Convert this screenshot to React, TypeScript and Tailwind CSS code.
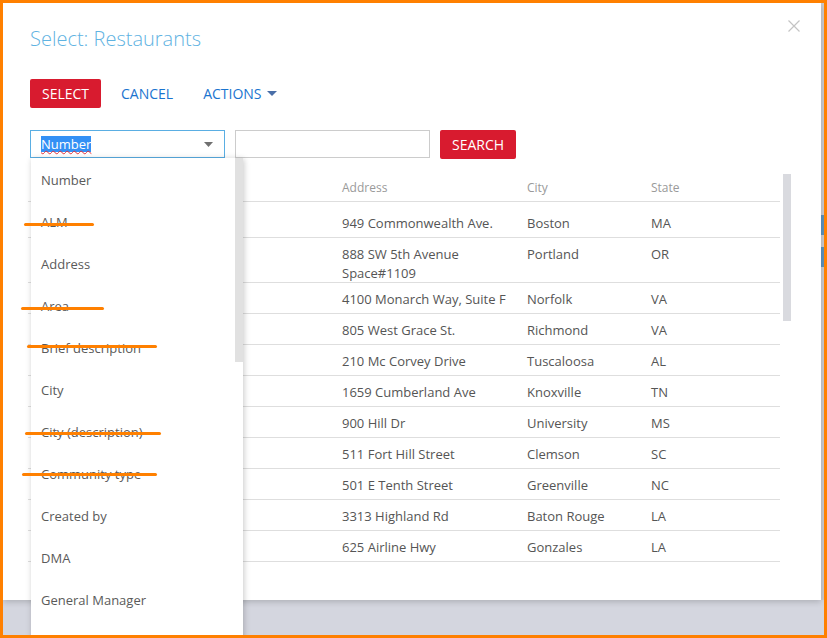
import React from "react";

const rows: { addr: string[]; city: string; state: string; h: string; pt: string }[] = [
  { addr: ["949 Commonwealth Ave."], city: "Boston", state: "MA", h: "h-[36px]", pt: "pt-[12px]" },
  { addr: ["888 SW 5th Avenue", "Space#1109"], city: "Portland", state: "OR", h: "h-[45px]", pt: "pt-[7px]" },
  { addr: ["4100 Monarch Way, Suite F"], city: "Norfolk", state: "VA", h: "h-[31px]", pt: "pt-[7px]" },
  { addr: ["805 West Grace St."], city: "Richmond", state: "VA", h: "h-[31px]", pt: "pt-[7px]" },
  { addr: ["210 Mc Corvey Drive"], city: "Tuscaloosa", state: "AL", h: "h-[31px]", pt: "pt-[7px]" },
  { addr: ["1659 Cumberland Ave"], city: "Knoxville", state: "TN", h: "h-[31px]", pt: "pt-[7px]" },
  { addr: ["900 Hill Dr"], city: "University", state: "MS", h: "h-[31px]", pt: "pt-[7px]" },
  { addr: ["511 Fort Hill Street"], city: "Clemson", state: "SC", h: "h-[31px]", pt: "pt-[7px]" },
  { addr: ["501 E Tenth Street"], city: "Greenville", state: "NC", h: "h-[31px]", pt: "pt-[7px]" },
  { addr: ["3313 Highland Rd"], city: "Baton Rouge", state: "LA", h: "h-[31px]", pt: "pt-[7px]" },
  { addr: ["625 Airline Hwy"], city: "Gonzales", state: "LA", h: "h-[31px]", pt: "pt-[7px]" },
];

const items = [
  "Number",
  "ALM",
  "Address",
  "Area",
  "Brief description",
  "City",
  "City (description)",
  "Community type",
  "Created by",
  "DMA",
  "General Manager",
];

export default function App() {
  return (
    <div
      className="w-[827px] h-[638px] overflow-hidden border-[3px] border-[#ff8000] bg-[#d4d6df] relative"
      style={{ fontFamily: '"Open Sans", "Liberation Sans", sans-serif' }}
    >
      <div className="flex">
        {/* Modal */}
        <div className="relative w-[818px] h-[597px] bg-white shadow-[0_2px_6px_rgba(0,0,0,0.18)] pl-[27px] pt-[22px] flex flex-col">
          {/* Close */}
          <svg className="absolute left-[785px] top-[17px]" width="12" height="12" viewBox="0 0 12 12">
            <path d="M0.5 0.5 L11.5 11.5 M11.5 0.5 L0.5 11.5" stroke="#c4c4c4" strokeWidth="1.2" />
          </svg>

          <div className="text-[20px] font-light leading-[28px] text-[#5fb3e2]">Select: Restaurants</div>

          {/* Buttons */}
          <div className="mt-[26px] flex items-center h-[29px]">
            <div className="w-[71px] h-[29px] rounded-[2px] bg-[#d81b2f] text-white text-[14px] flex items-center justify-center">
              SELECT
            </div>
            <div className="ml-[20px] text-[14px] text-[#1a74cf]">CANCEL</div>
            <div className="ml-[30px] text-[14px] text-[#1a74cf] flex items-center">
              ACTIONS
              <svg className="ml-[5px]" width="10" height="6" viewBox="0 0 10 6">
                <path d="M0 0 L10 0 L5 5 Z" fill="#4a6fa8" />
              </svg>
            </div>
          </div>

          {/* Search row */}
          <div className="mt-[22px] flex items-start gap-[10px] h-[29px]">
            <div className="w-[195px] h-[28px] border border-[#5aaee3] flex items-center pl-[10px] pr-[11px] justify-between">
              <span className="text-[13px] leading-[16px] bg-[#3390f5] text-white underline decoration-wavy decoration-[#e5303a] decoration-1 underline-offset-[1px]">
                Number
              </span>
              <svg width="9" height="5" viewBox="0 0 9 5">
                <path d="M0 0 L9 0 L4.5 5 Z" fill="#707070" />
              </svg>
            </div>
            <div className="w-[195px] h-[28px] border border-[#cccccc]" />
            <div className="w-[76px] h-[29px] rounded-[2px] bg-[#d81b2f] text-white text-[14px] flex items-center justify-center">
              SEARCH
            </div>
          </div>

          {/* Table */}
          <div className="mt-[12px] -ml-[2px] flex items-start gap-[3px]">
            <div className="w-[752px] text-[13px] text-[#555]">
              <div className="grid grid-cols-[304px_185px_124px_139px] h-[31px] border-b border-[#dedede] pt-[8px] text-[12px] leading-[17px] text-[#9a9a9a]">
                <div />
                <div className="pl-[10px]">Address</div>
                <div className="pl-[10px]">City</div>
                <div className="pl-[10px]">State</div>
              </div>
              {rows.map((r, i) => (
                <div
                  key={i}
                  className={`grid grid-cols-[304px_185px_124px_139px] border-b border-[#dedede] leading-[19px] ${r.h} ${r.pt}`}
                >
                  <div />
                  <div className="pl-[10px]">
                    {r.addr.map((a, j) => (
                      <div key={j}>{a}</div>
                    ))}
                  </div>
                  <div className="pl-[10px]">{r.city}</div>
                  <div className="pl-[10px]">{r.state}</div>
                </div>
              ))}
            </div>
            <div className="mt-[3px] w-[8px] h-[147px] bg-[#d9dadf]" />
          </div>

          {/* Dropdown list */}
          <div className="absolute left-[28px] top-[155px] w-[212px] h-[500px] bg-white shadow-[1px_1px_6px_rgba(0,0,0,0.22)] flex">
            <div className="flex-1 pt-[2px]">
              {items.map((it) => (
                <div key={it} className="h-[42px] flex items-center pl-[10px] text-[13px] text-[#5a5a5a]">
                  {it}
                </div>
              ))}
            </div>
            <div className="w-[8px] h-[204px] bg-[#e1e1e1]" />
          </div>
        </div>

        {/* Right strip of page behind */}
        <div className="w-[3px] h-[597px] bg-[#c9cad0] flex flex-col">
          <div className="mt-[212px] h-[20px] bg-[#5d93bd]" />
          <div className="mt-[12px] h-[20px] bg-[#5d93bd]" />
        </div>
      </div>

      {/* Annotation strike lines */}
      <div className="absolute left-[21px] top-[220px] w-[70px] h-[3px] rounded-full bg-[#ff8000]" />
      <div className="absolute left-[18px] top-[304px] w-[83px] h-[3px] rounded-full bg-[#ff8000]" />
      <div className="absolute left-[24px] top-[342px] w-[130px] h-[3px] rounded-full bg-[#ff8000]" />
      <div className="absolute left-[22px] top-[429px] w-[136px] h-[3px] rounded-full bg-[#ff8000]" />
      <div className="absolute left-[19px] top-[470px] w-[135px] h-[3px] rounded-full bg-[#ff8000]" />
    </div>
  );
}
